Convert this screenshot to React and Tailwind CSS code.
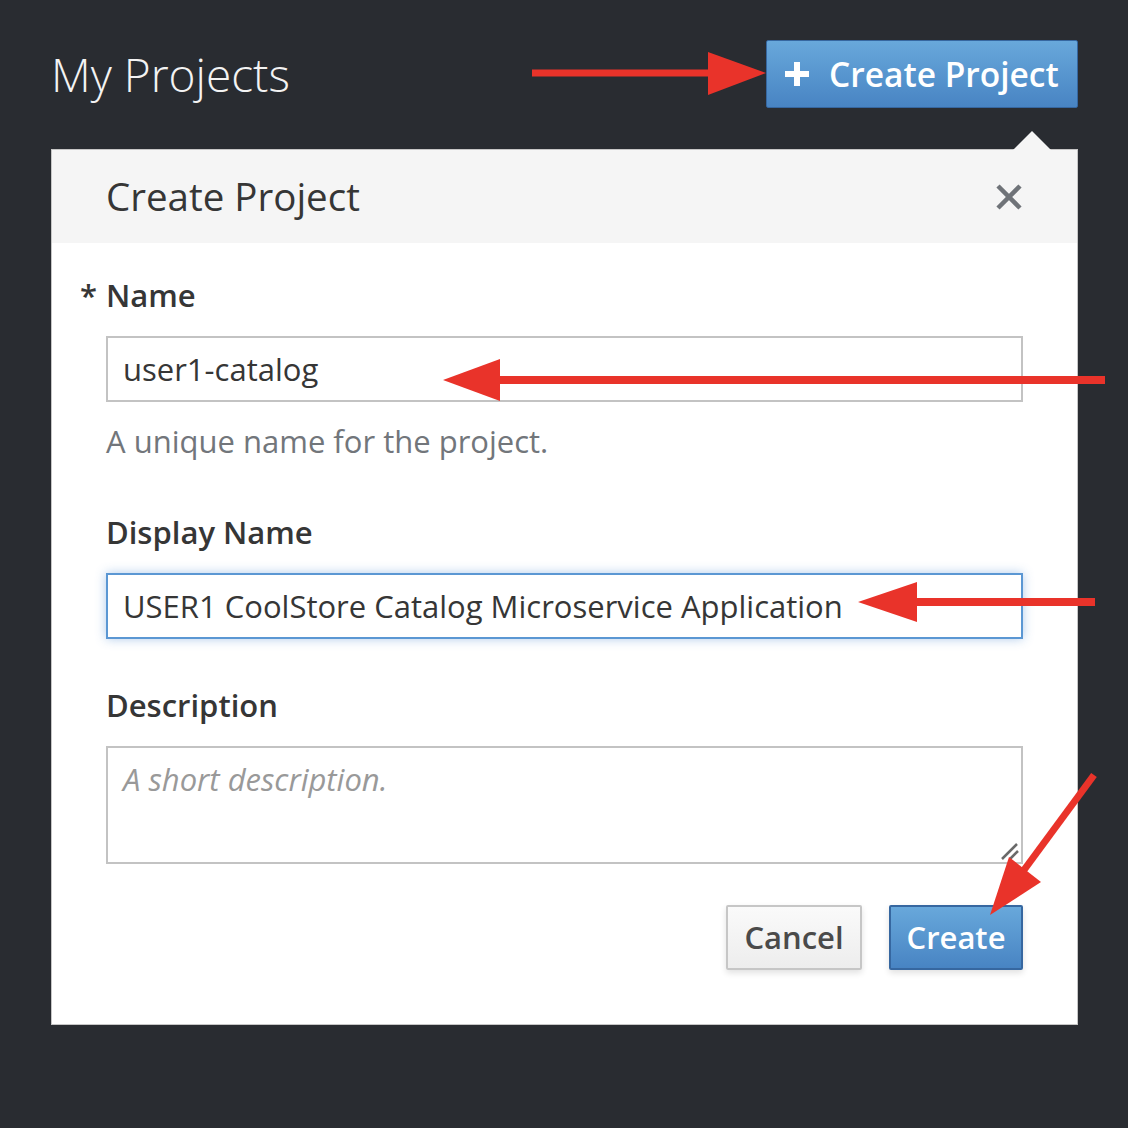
import React from "react"

/**
 * CreateProjectPopover - "My Projects" header with the create project popover open
 */
function Arrows() {
    const red = "#e9332a"
    return (
        <svg className="pointer-events-none absolute left-0 top-0" width="1128" height="1128" viewBox="0 0 1128 1128">
            {/* header arrow */}
            <line x1="532" y1="73" x2="712" y2="73" stroke={red} strokeWidth="7" />
            <polygon points="708,52 766,73 708,95" fill={red} />
            {/* name arrow */}
            <line x1="1105" y1="380" x2="496" y2="380" stroke={red} strokeWidth="8" />
            <polygon points="500,359 443,380 500,401" fill={red} />
            {/* display name arrow */}
            <line x1="1095" y1="602" x2="912" y2="602" stroke={red} strokeWidth="8" />
            <polygon points="917,582 858,602 917,622" fill={red} />
            {/* create arrow */}
            <line x1="1094" y1="775" x2="1024" y2="870" stroke={red} strokeWidth="7" />
            <polygon points="1009,857 990,915 1041,882" fill={red} />
        </svg>
    )
}

export default function App() {
    return (
        <div className="relative min-h-[1128px] w-[1128px] overflow-hidden bg-[#292c31] font-['Open_Sans',sans-serif]">
            {/* Header */}
            <header className="flex items-center justify-between pl-[51px] pr-[50px] pt-[40px]">
                <h1 className="text-[46px] font-light leading-none text-[#f3f3f3]">My Projects</h1>
                <button className="flex h-[68px] w-[312px] items-center gap-[19px] rounded-[2px] border border-[#3667a0] bg-gradient-to-b from-[#68a8db] to-[#4884c3] pl-[17px] text-[33.5px] font-semibold text-white">
                    <svg width="26" height="26" viewBox="0 0 26 26">
                        <path d="M13 1v24M1 13h24" stroke="#fff" strokeWidth="6" />
                    </svg>
                    Create Project
                </button>
            </header>

            {/* Popover */}
            <div className="relative ml-[51px] mt-[41px] w-[1027px] border border-[#c6c6c6] bg-white">
                <div className="absolute -top-[19px] left-[961px] h-0 w-0 border-x-[19px] border-b-[19px] border-x-transparent border-b-[#f5f5f5]" />
                <div className="flex h-[93px] items-center justify-between bg-[#f5f5f5] pl-[54px] pr-[55px]">
                    <h2 className="text-[38.5px] leading-none text-[#363636]">Create Project</h2>
                    <svg width="26" height="26" viewBox="0 0 26 26">
                        <path d="M2 2l22 22M24 2L2 24" stroke="#6f7378" strokeWidth="4.5" />
                    </svg>
                </div>

                <div className="pb-[54px] pl-[54px] pr-[54px] pt-[32px]">
                    <label className="relative block text-[31px] font-semibold leading-[40px] text-[#363636]">
                        <span className="absolute -left-[26px] top-0">*</span>
                        Name
                    </label>
                    <input
                        readOnly
                        value="user1-catalog"
                        className="mt-[21px] block h-[66px] w-full border-2 border-[#c3c3c3] bg-white px-[15px] text-[31px] text-[#363636] outline-none"
                    />
                    <p className="mt-[19px] text-[31px] leading-[40px] text-[#72767b]">A unique name for the project.</p>

                    <label className="mt-[51px] block text-[31px] font-semibold leading-[40px] text-[#363636]">Display Name</label>
                    <input
                        readOnly
                        value="USER1 CoolStore Catalog Microservice Application"
                        className="mt-[21px] block h-[66px] w-full border-2 border-[#5b97d3] bg-white px-[15px] text-[31px] text-[#363636] shadow-[0_0_10px_rgba(80,140,210,0.45)] outline-none"
                    />

                    <label className="mt-[46px] block text-[31px] font-semibold leading-[40px] text-[#363636]">Description</label>
                    <div className="relative mt-[21px]">
                        <textarea
                            readOnly
                            placeholder="A short description."
                            className="block h-[118px] w-full resize-none border-2 border-[#c3c3c3] bg-white px-[15px] py-[11px] text-[31px] leading-[40px] text-[#363636] outline-none placeholder:italic placeholder:text-[#999]"
                        />
                        <svg className="absolute bottom-[3px] right-[3px]" width="20" height="20" viewBox="0 0 20 20">
                            <path d="M2 18L17 3M10 18L18 10" stroke="#6a6a6a" strokeWidth="2.5" />
                        </svg>
                    </div>

                    <div className="mt-[41px] flex justify-end gap-[27px]">
                        <button className="h-[65px] w-[136px] rounded-[2px] border-2 border-[#c6c6c6] bg-gradient-to-b from-[#fafafa] to-[#ededed] text-[31px] font-semibold text-[#4a4a4a] shadow-[0_3px_6px_rgba(0,0,0,0.12)]">
                            Cancel
                        </button>
                        <button className="h-[65px] w-[134px] rounded-[2px] border-2 border-[#3667a0] bg-gradient-to-b from-[#68a8db] to-[#4884c3] text-[31px] font-semibold text-white shadow-[0_3px_6px_rgba(0,0,0,0.12)]">
                            Create
                        </button>
                    </div>
                </div>
            </div>

            <Arrows />
        </div>
    )
}
